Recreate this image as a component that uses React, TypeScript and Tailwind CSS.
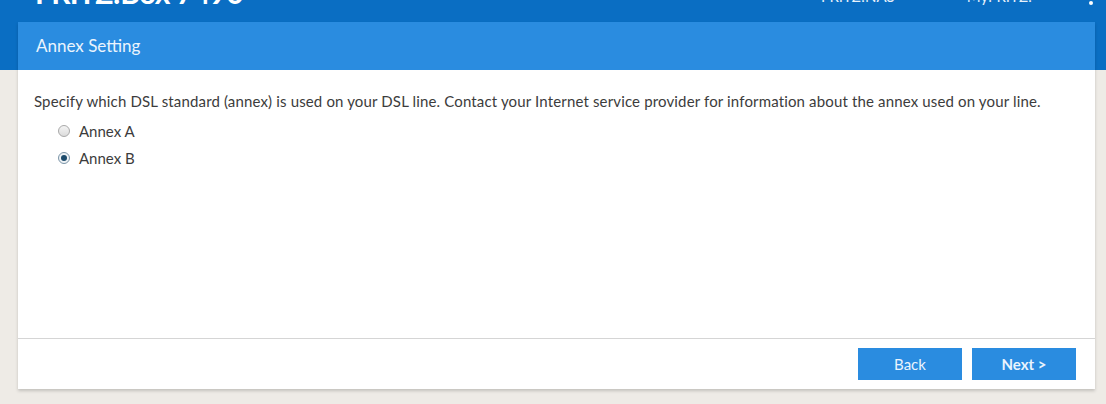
export default function App() {
  return (
    <div
      className="relative w-[1106px] h-[404px] overflow-hidden bg-[#eeebe6]"
      style={{ fontFamily: '"Lato", "Open Sans", sans-serif' }}
    >
      {/* Top bar */}
      <header className="h-[70px] bg-[#0a6ec3] overflow-hidden">
        <div className="flex items-start justify-between pl-[35px] pr-[12px] -mt-[28px]">
          <div className="text-[30px] font-bold text-white leading-[40px] tracking-tight">FRITZ!Box 7490</div>
          <div className="flex items-start pt-[13px] text-[15px] text-[#e6f1fb]">
            <span>FRITZ!NAS</span>
            <span className="ml-[72px]">MyFRITZ!</span>
            <span className="ml-[56px] flex flex-col items-center gap-[3px] pt-[2px] w-[6px]">
              <span className="w-[4px] h-[4px] rounded-full bg-white" />
              <span className="w-[4px] h-[4px] rounded-full bg-white" />
              <span className="w-[4px] h-[4px] rounded-full bg-white" />
            </span>
          </div>
        </div>
      </header>

      {/* Card */}
      <div className="absolute left-[18px] top-[22px] w-[1077px] bg-white shadow-[0_2px_3px_rgba(0,0,0,0.18)]">
        <div className="h-[48px] bg-[#2a8ce0] flex items-center pl-[18px] text-[17px] text-[#eaf4fd]">
          Annex Setting
        </div>
        <div className="h-[268px] pl-[16px] pt-[21px] text-[15px] text-[#3c3c3c]">
          <p className="leading-[20px] tracking-[0.15px]">
            Specify which DSL standard (annex) is used on your DSL line. Contact your Internet service provider for information about the annex used on your line.
          </p>
          <div className="mt-[10px] pl-[24px] flex flex-col gap-[7px]">
            <label className="flex items-center gap-[9px] leading-[20px]">
              <span className="w-[12px] h-[12px] rounded-full border border-[#a9a9a9] bg-gradient-to-b from-[#f4f4f4] to-[#dcdcdc]" />
              Annex A
            </label>
            <label className="flex items-center gap-[9px] leading-[20px]">
              <span className="w-[12px] h-[12px] rounded-full border border-[#7c95a8] bg-[#eef2f5] flex items-center justify-center">
                <span className="w-[6px] h-[6px] rounded-full bg-[#1c4a6b]" />
              </span>
              Annex B
            </label>
          </div>
        </div>
        <div className="border-t border-[#d5d5d5] h-[51px] flex items-start justify-end gap-[10px] pt-[9px] pr-[19px]">
          <button className="w-[104px] h-[32px] bg-[#2a8ce0] text-[#eaf4fd] text-[15px]">Back</button>
          <button className="w-[104px] h-[32px] bg-[#2a8ce0] text-[#eaf4fd] text-[15px] font-bold">Next &gt;</button>
        </div>
      </div>
    </div>
  );
}
